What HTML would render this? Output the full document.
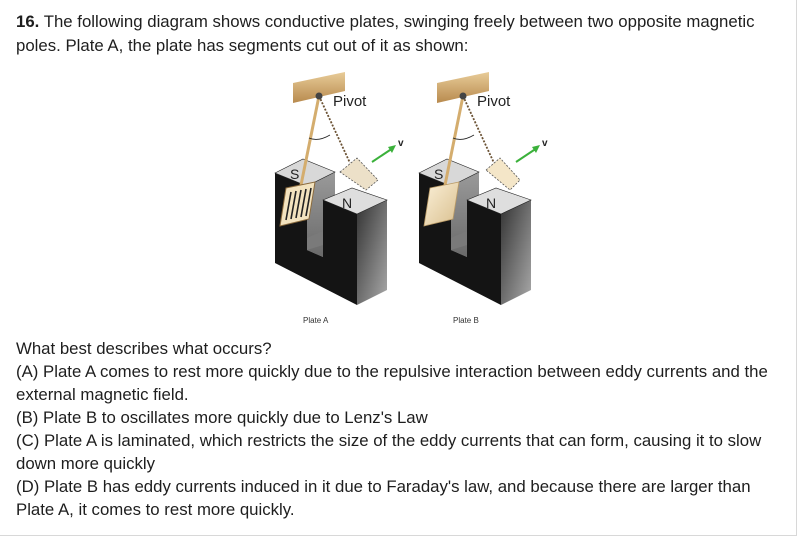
<!DOCTYPE html>
<html><head><meta charset="utf-8"><style>
html,body{margin:0;padding:0;background:#fff;}
.wrap{position:absolute;left:0;top:0;width:796px;height:535px;border-right:1px solid #d8d8d8;border-bottom:1px solid #d8d8d8;}
p{margin:0;position:absolute;left:16px;font-family:"Liberation Sans",Arial,sans-serif;font-size:16.8px;color:#1e1e1e;white-space:nowrap;}
svg{position:absolute;left:0;top:0;}
</style></head><body><div class="wrap">
<p style="top:12px"><b>16.</b> The following diagram shows conductive plates, swinging freely between two opposite magnetic</p>
<p style="top:36px">poles. Plate A, the plate has segments cut out of it as shown:</p>
<svg width="799" height="340" viewBox="0 0 799 340">
<defs>
<linearGradient id="wood" x1="0" y1="0" x2="0" y2="1"><stop offset="0" stop-color="#e8cc98"/><stop offset="1" stop-color="#b88a4e"/></linearGradient>
<linearGradient id="side" x1="0" y1="0" x2="1" y2="1"><stop offset="0" stop-color="#333"/><stop offset="1" stop-color="#aaa"/></linearGradient>
<linearGradient id="inner" x1="0" y1="0" x2="0" y2="1"><stop offset="0" stop-color="#9a9a9a"/><stop offset="1" stop-color="#6a6a6a"/></linearGradient>
<linearGradient id="plate" x1="0" y1="0" x2="1" y2="1"><stop offset="0" stop-color="#fbf0d8"/><stop offset="1" stop-color="#d9bf8e"/></linearGradient>
<g id="mag">
<polygon points="47,126 75,112 75,185 63,191 63,197 47,190" fill="url(#inner)"/>
<polygon points="47,178 63,171 75,177 63,185 47,190" fill="#7a7a7a"/>
<polygon points="15,113 47,126 47,190 63,197 63,140 97,154 97,245 15,203" fill="#141414"/>
<polygon points="97,154 127,140 127,230 97,245" fill="url(#side)"/>
<polygon points="15,113 43,99 75,112 47,126" fill="#d8d8d8" stroke="#222" stroke-width="0.6"/>
<polygon points="63,140 92,128 127,140 97,154" fill="#dedede" stroke="#222" stroke-width="0.6"/>
<text x="30" y="119" font-family="Liberation Sans,sans-serif" font-size="14" fill="#222">S</text>
<text x="82" y="148" font-family="Liberation Sans,sans-serif" font-size="14" fill="#222">N</text>
<polygon points="33,23 85,12 85,31 33,43" fill="url(#wood)"/>
<line x1="59" y1="36" x2="90" y2="103" stroke="#6b5234" stroke-width="1.8" stroke-dasharray="2,1.5"/>
<line x1="59" y1="36" x2="40" y2="130" stroke="#d4ad6e" stroke-width="3"/>
<circle cx="59" cy="36" r="3.5" fill="#444"/>
<text x="73" y="46" font-family="Liberation Sans,sans-serif" font-size="15" fill="#222">Pivot</text>
<path d="M49 78 Q58 82 70 75" stroke="#222" fill="none" stroke-width="0.8"/>
<line x1="112" y1="102" x2="133" y2="88" stroke="#3bb13b" stroke-width="2"/>
<polygon points="136,85 128,87 132,93" fill="#3bb13b"/>
<text x="138" y="86" font-family="Liberation Sans,sans-serif" font-size="10" font-weight="bold" fill="#222">v</text>
</g>
</defs>
<use href="#mag" x="260" y="60"/>
<use href="#mag" x="404" y="60"/>
<polygon points="286,188 315,182 309,219 280,226" fill="#f3e3bf" stroke="#8b6b3e" stroke-width="1"/>
<g stroke="#222" stroke-width="1.6"><line x1="291" y1="192" x2="286" y2="220"/><line x1="296" y1="191" x2="291" y2="219"/><line x1="301" y1="190" x2="296" y2="218"/><line x1="306" y1="189" x2="301" y2="217"/><line x1="311" y1="188" x2="306" y2="216"/></g>
<polygon points="340,172 357,158 378,180 366,190" fill="#ece0c8" stroke="#555" stroke-width="0.8" stroke-dasharray="2,1.5"/>
<polygon points="430,188 459,182 453,219 424,226" fill="url(#plate)" stroke="#b99a66" stroke-width="0.8"/>
<polygon points="486,170 500,158 520,180 510,190" fill="#f4e6c8" stroke="#555" stroke-width="0.8" stroke-dasharray="2,1.5"/>
<text x="303" y="323" font-family="Liberation Sans,sans-serif" font-size="8" fill="#333">Plate A</text>
<text x="453" y="323" font-family="Liberation Sans,sans-serif" font-size="8" fill="#333">Plate B</text>
</svg>
<p style="top:339px">What best describes what occurs?</p>
<p style="top:362px">(A) Plate A comes to rest more quickly due to the repulsive interaction between eddy currents and the</p>
<p style="top:385px">external magnetic field.</p>
<p style="top:408px">(B) Plate B to oscillates more quickly due to Lenz's Law</p>
<p style="top:431px">(C) Plate A is laminated, which restricts the size of the eddy currents that can form, causing it to slow</p>
<p style="top:454px">down more quickly</p>
<p style="top:477px">(D) Plate B has eddy currents induced in it due to Faraday's law, and because there are larger than</p>
<p style="top:500px">Plate A, it comes to rest more quickly.</p>
</div></body></html>
